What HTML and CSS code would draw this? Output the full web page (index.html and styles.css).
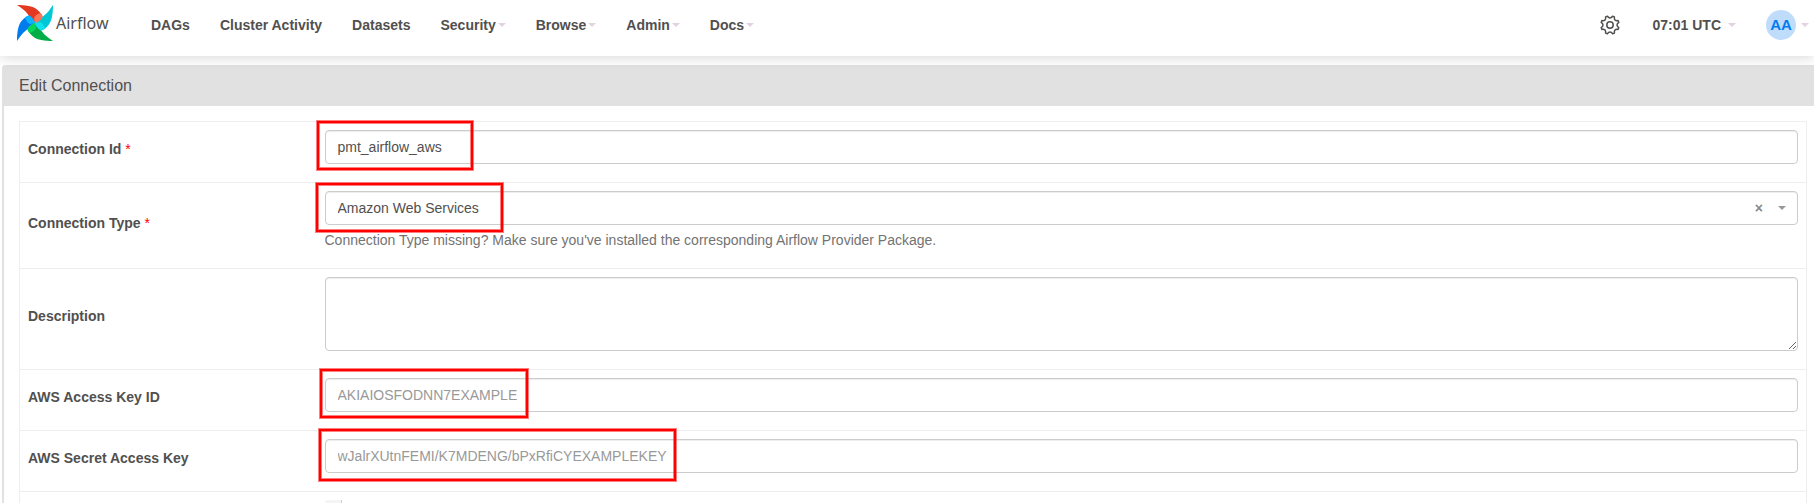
FILE: index.html
```html
<!DOCTYPE html>
<html lang="en">
<head>
<meta charset="utf-8">
<title>Edit Connection - Airflow</title>
<link rel="stylesheet" href="styles.css">
</head>
<body>
<header class="navbar">
  <a class="brand" href="#">
    <svg class="brand-logo" viewBox="0 0 36 36" aria-hidden="true">
      <defs>
        <path id="blade" d="M0 0C8 0 16 1 20 4.500C23 7 25.500 10 25.500 12C24.500 14 22 17 18 18C17 14 13 12 11 9.500C8 5 4 3 0 0z"/>
        <path id="fold" d="M25.500 12C25.500 11 24.500 9 23.500 8C21 9 18 10 17 13C17 15 18 16 18 18C22 17 24.500 14 25.500 12z"/>
      </defs>
      <use href="#blade" fill="#e43921"/>
      <use href="#blade" fill="#00c7d4" transform="rotate(90 18 18)"/>
      <use href="#blade" fill="#00ad46" transform="rotate(180 18 18)"/>
      <use href="#blade" fill="#017cee" transform="rotate(270 18 18)"/>
      <use href="#fold" fill="#ff7557"/>
      <use href="#fold" fill="#11e1ee" transform="rotate(90 18 18)"/>
      <use href="#fold" fill="#04d659" transform="rotate(180 18 18)"/>
      <use href="#fold" fill="#0cb6ff" transform="rotate(270 18 18)"/>
    </svg>
    <span class="brand-name">Airflow</span>
  </a>
  <nav class="menu">
    <a class="menu-item" href="#">DAGs</a>
    <a class="menu-item" href="#">Cluster Activity</a>
    <a class="menu-item" href="#">Datasets</a>
    <button class="menu-item" type="button">Security<span class="caret"></span></button>
    <button class="menu-item" type="button">Browse<span class="caret"></span></button>
    <button class="menu-item" type="button">Admin<span class="caret"></span></button>
    <button class="menu-item" type="button">Docs<span class="caret"></span></button>
  </nav>
  <div class="tools">
    <button class="gear" type="button" aria-label="Settings">
      <svg viewBox="0 0 20 20" aria-hidden="true" fill="none" stroke="#51504f" stroke-width="1.500" stroke-linejoin="round">
        <path d="M18.800 7.400Q15.200 10 18.800 12.600L18.100 14.400Q13.700 13.700 14.400 18.100L12.600 18.800Q10 15.200 7.400 18.800L5.600 18.100Q6.300 13.700 1.900 14.400L1.200 12.600Q4.800 10 1.200 7.400L1.900 5.600Q6.300 6.300 5.600 1.900L7.400 1.200Q10 4.800 12.600 1.200L14.400 1.900Q13.700 6.300 18.100 5.600z"/>
        <circle cx="10" cy="10" r="3.200"/>
      </svg>
    </button>
    <button class="menu-item clock" type="button">07:01 UTC<span class="caret"></span></button>
    <button class="menu-item user" type="button"><span class="avatar">AA</span><span class="caret"></span></button>
  </div>
</header>

<main class="panel">
  <h1 class="panel-title">Edit Connection</h1>
  <form class="panel-body">
    <table class="fields">
      <tr>
        <th scope="row"><label for="conn-id">Connection Id <span class="required">*</span></label></th>
        <td><div class="field">
          <input class="control" id="conn-id" type="text" value="pmt_airflow_aws">
          <span class="mark mark-id"></span>
        </div></td>
      </tr>
      <tr>
        <th scope="row"><label for="conn-type">Connection Type <span class="required">*</span></label></th>
        <td><div class="field">
          <select class="control" id="conn-type"><option>Amazon Web Services</option></select>
          <div class="select-tools">
            <button class="clear" type="button" aria-label="Clear">×</button>
            <span class="caret caret-dark"></span>
          </div>
          <span class="mark mark-type"></span>
          <p class="help">Connection Type missing? Make sure you've installed the corresponding Airflow Provider Package.</p>
        </div></td>
      </tr>
      <tr>
        <th scope="row"><label for="description">Description</label></th>
        <td><div class="field"><textarea class="control area" id="description"></textarea></div></td>
      </tr>
      <tr>
        <th scope="row"><label for="access-key">AWS Access Key ID</label></th>
        <td><div class="field">
          <input class="control" id="access-key" type="text" placeholder="AKIAIOSFODNN7EXAMPLE">
          <span class="mark mark-key"></span>
        </div></td>
      </tr>
      <tr>
        <th scope="row"><label for="secret-key">AWS Secret Access Key</label></th>
        <td><div class="field">
          <input class="control" id="secret-key" type="text" placeholder="wJalrXUtnFEMI/K7MDENG/bPxRfiCYEXAMPLEKEY">
          <span class="mark mark-secret"></span>
        </div></td>
      </tr>
      <tr>
        <th></th>
        <td><button class="more" type="button" aria-label="More"></button></td>
      </tr>
    </table>
  </form>
</main>
</body>
</html>
```
FILE: styles.css
```css
* { box-sizing: border-box; }

html { height: 100%; overflow: hidden; }

body {
  margin: 0;
  height: 100%;
  overflow: hidden;
  background: #fff;
  color: #51504f;
  font: 14px/20px "Liberation Sans", Arial, sans-serif;
}

button {
  border: 0;
  padding: 0;
  background: none;
  color: inherit;
  font: inherit;
}

.navbar {
  position: relative;
  display: flex;
  height: 56px;
  padding: 0 5px 0 17px;
  background: #fff;
  box-shadow: 0 2px 12px rgba(0, 0, 0, 0.15);
}

.brand {
  display: flex;
  gap: 3px;
  width: 119px;
  padding-top: 5px;
  color: #51504f;
  text-decoration: none;
}

.brand-logo { width: 36px; height: 36px; }

.brand-name { font: 16px/36px "Noto Sans", sans-serif; }

.menu { display: flex; }

.menu-item {
  display: flex;
  align-items: center;
  height: 50px;
  padding: 0 15px;
  color: #51504f;
  font-weight: bold;
  text-decoration: none;
}

.caret {
  margin-left: 2px;
  border: 4px solid transparent;
  border-top-color: #e2d2e2;
  border-bottom: 0;
}

.tools {
  display: flex;
  align-items: center;
  height: 50px;
  margin-left: auto;
}

.gear { width: 20px; height: 20px; margin-right: 18px; }
.gear svg { display: block; }

.clock .caret { margin-left: 7px; }

.user { gap: 3px; padding-right: 0; }

.avatar {
  width: 30px;
  height: 30px;
  border-radius: 50%;
  background: #bfddfb;
  color: #017cee;
  font-size: 15px;
  line-height: 30px;
  text-align: center;
}

.panel {
  margin: 9px 0 0 2px;
  border-left: 2px solid #e1e1e1;
  border-top-left-radius: 4px;
}

.panel-title {
  margin: 0 0 0 -2px;
  padding: 11px 17px 10px;
  border-top-left-radius: 4px;
  background: #e1e1e1;
  font-size: 16px;
  font-weight: normal;
  line-height: 20px;
}

.panel-body { padding: 15px 7px 0 15px; }

.fields {
  width: 100%;
  border: 1px solid #eee;
  border-collapse: collapse;
}

.fields tr { border-top: 1px solid #eee; }

.fields th {
  width: 297px;
  padding: 8px;
  text-align: left;
  vertical-align: middle;
}

.fields label { display: block; margin-bottom: 6px; }

.fields td { padding: 8px; vertical-align: top; }

.required { color: #f00; font-weight: normal; }

.field { position: relative; padding-bottom: 10px; }

.control {
  display: block;
  width: 100%;
  height: 34px;
  padding: 6px 12px;
  border: 1px solid #ccc;
  border-radius: 4px;
  background: #fff;
  box-shadow: inset 0 1px 1px rgba(0, 0, 0, 0.075);
  color: #51504f;
  font: inherit;
  appearance: none;
}

.control::placeholder { color: #999; opacity: 1; }

.area { height: 74px; }

.help { margin: 5px 0 0; color: #737373; }

.select-tools {
  position: absolute;
  top: 0;
  right: 12px;
  display: flex;
  align-items: center;
  gap: 13px;
  height: 34px;
}

.clear { color: #888; font-size: 14px; font-weight: bold; }

.caret-dark { border-top-color: #999; }

.mark {
  position: absolute;
  border: 2px solid #f00;
  box-shadow: 0 0 0 1px rgba(255, 0, 0, 0.5), inset 0 0 0 1px rgba(255, 0, 0, 0.5);
  pointer-events: none;
}

.mark-id { top: -9px; left: -8px; width: 156px; height: 49px; }
.mark-type { top: -8px; left: -9px; width: 187px; height: 49px; }
.mark-key { top: -9px; left: -5px; width: 208px; height: 49px; }
.mark-secret { top: -10px; left: -6px; width: 357px; height: 52px; }

.more {
  display: block;
  width: 17px;
  height: 17px;
  border-right: 1px solid #ccc;
  background: #f5f5f5;
}
```
